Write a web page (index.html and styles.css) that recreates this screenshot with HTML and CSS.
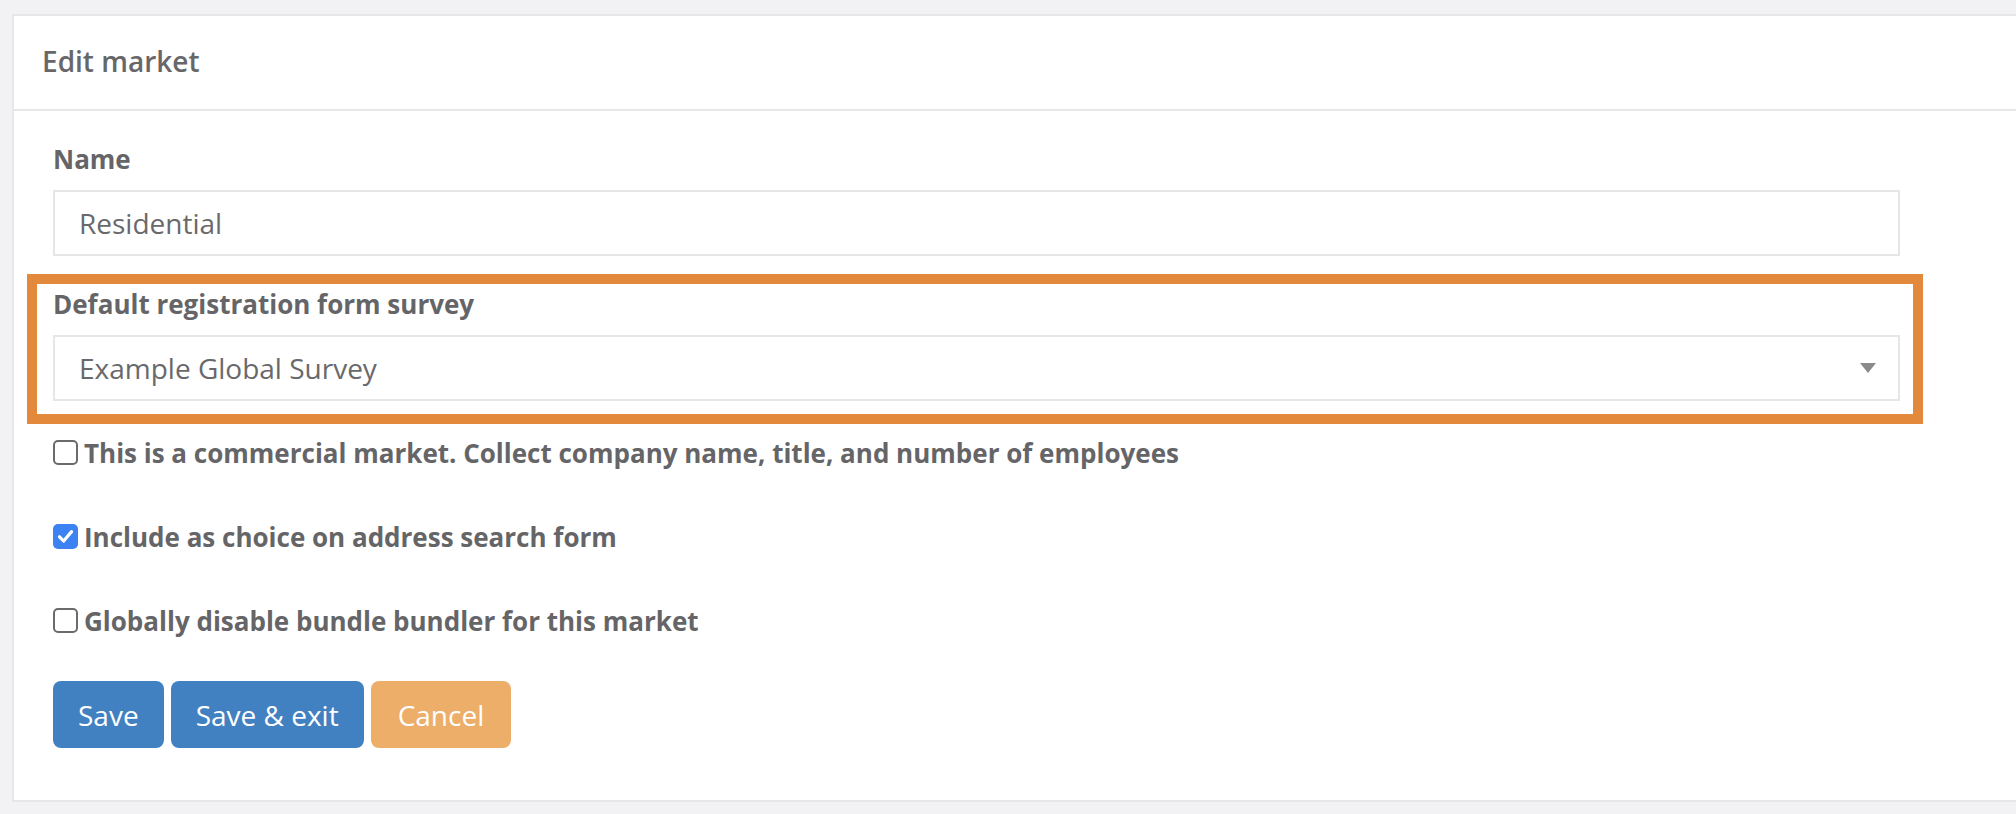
FILE: index.html
```html
<!DOCTYPE html>
<html lang="en">
<head>
<meta charset="utf-8">
<title>Edit market</title>
<link rel="stylesheet" href="styles.css">
</head>
<body>
  <div class="card">
    <div class="card-header">Edit market</div>
    <div class="card-body">
      <form class="form">
        <div class="form-group">
          <label class="control-label">Name</label>
          <div class="input">Residential</div>
        </div>
        <div class="form-group highlight">
          <label class="control-label">Default registration form survey</label>
          <div class="input select">
            <span>Example Global Survey</span>
            <svg class="caret" width="16" height="10" viewBox="0 0 16 10"><path d="M0 0 H16 L8 10 Z" fill="#8a8a8a"/></svg>
          </div>
        </div>
        <div class="checks">
          <div class="check-row">
            <span class="checkbox"></span>
            <span class="check-label">This is a commercial market. Collect company name, title, and number of employees</span>
          </div>
          <div class="check-row">
            <span class="checkbox checked">
              <svg width="25" height="25" viewBox="0 0 25 25"><path d="M6.5 12.8 L10.6 17 L18.6 7.6" fill="none" stroke="#fff" stroke-width="3.2" stroke-linecap="round" stroke-linejoin="round"/></svg>
            </span>
            <span class="check-label">Include as choice on address search form</span>
          </div>
          <div class="check-row">
            <span class="checkbox"></span>
            <span class="check-label">Globally disable bundle bundler for this market</span>
          </div>
        </div>
        <div class="actions">
          <button type="button" class="btn btn-primary">Save</button>
          <button type="button" class="btn btn-primary">Save &amp; exit</button>
          <button type="button" class="btn btn-warning">Cancel</button>
        </div>
      </form>
    </div>
  </div>
</body>
</html>
```
FILE: styles.css
```css
html, body {
  margin: 0;
  padding: 0;
  background: #f2f2f4;
  overflow: hidden;
  font-family: "Open Sans", "Noto Sans", sans-serif;
  color: #666669;
}

.card {
  margin: 14px -30px 0 12px;
  background: #ffffff;
  border: 2px solid #e7e7e9;
}

.card-header {
  padding: 25px 30px 28px 28px;
  font-size: 28px;
  line-height: 40px;
  font-weight: 600;
  color: #67676a;
  border-bottom: 2px solid #e7e7e9;
}

.card-body {
  padding: 30px 0 52px 39px;
}

.form {
  width: 1847px;
}

.form-group {
  display: flex;
  flex-direction: column;
  margin-bottom: 30px;
}

.form-group.highlight {
  position: relative;
  margin-bottom: 34px;
}

.form-group.highlight::after {
  content: "";
  position: absolute;
  top: -12px;
  left: -26px;
  right: -23px;
  bottom: -23px;
  border: 10px solid #e3893c;
  pointer-events: none;
}

.control-label {
  font-size: 26px;
  line-height: 37px;
  font-weight: 700;
  color: #656568;
  margin-bottom: 12px;
}

.input {
  box-sizing: border-box;
  height: 66px;
  border: 2px solid #e6e6e6;
  padding: 0 22px 0 24px;
  font-size: 28px;
  color: #69696c;
  display: flex;
  align-items: center;
}

.select {
  justify-content: space-between;
}

.caret {
  display: block;
}

.checks {
  display: flex;
  flex-direction: column;
  gap: 47px;
  margin-bottom: 41px;
}

.check-row {
  display: flex;
  align-items: flex-start;
  height: 37px;
}

.checkbox {
  box-sizing: border-box;
  flex: none;
  width: 25px;
  height: 25px;
  margin-top: 5px;
  margin-right: 6px;
  border: 2px solid #6b6b6b;
  border-radius: 5px;
  background: #fff;
  display: flex;
  align-items: center;
  justify-content: center;
}

.checkbox.checked {
  border: none;
  background: #3d82f2;
}

.checkbox svg {
  display: block;
}

.check-label {
  font-size: 26px;
  line-height: 37px;
  font-weight: 700;
  color: #656568;
}

.actions {
  display: flex;
  gap: 7px;
}

.btn {
  height: 67px;
  padding: 0 25px;
  border: none;
  border-radius: 8px;
  font-family: "Open Sans", "Noto Sans", sans-serif;
  font-size: 28px;
  color: #ffffff;
  cursor: pointer;
}

.btn-primary {
  background: #4281c1;
}

.btn-warning {
  background: #ecae69;
  padding: 0 27px;
}
```
